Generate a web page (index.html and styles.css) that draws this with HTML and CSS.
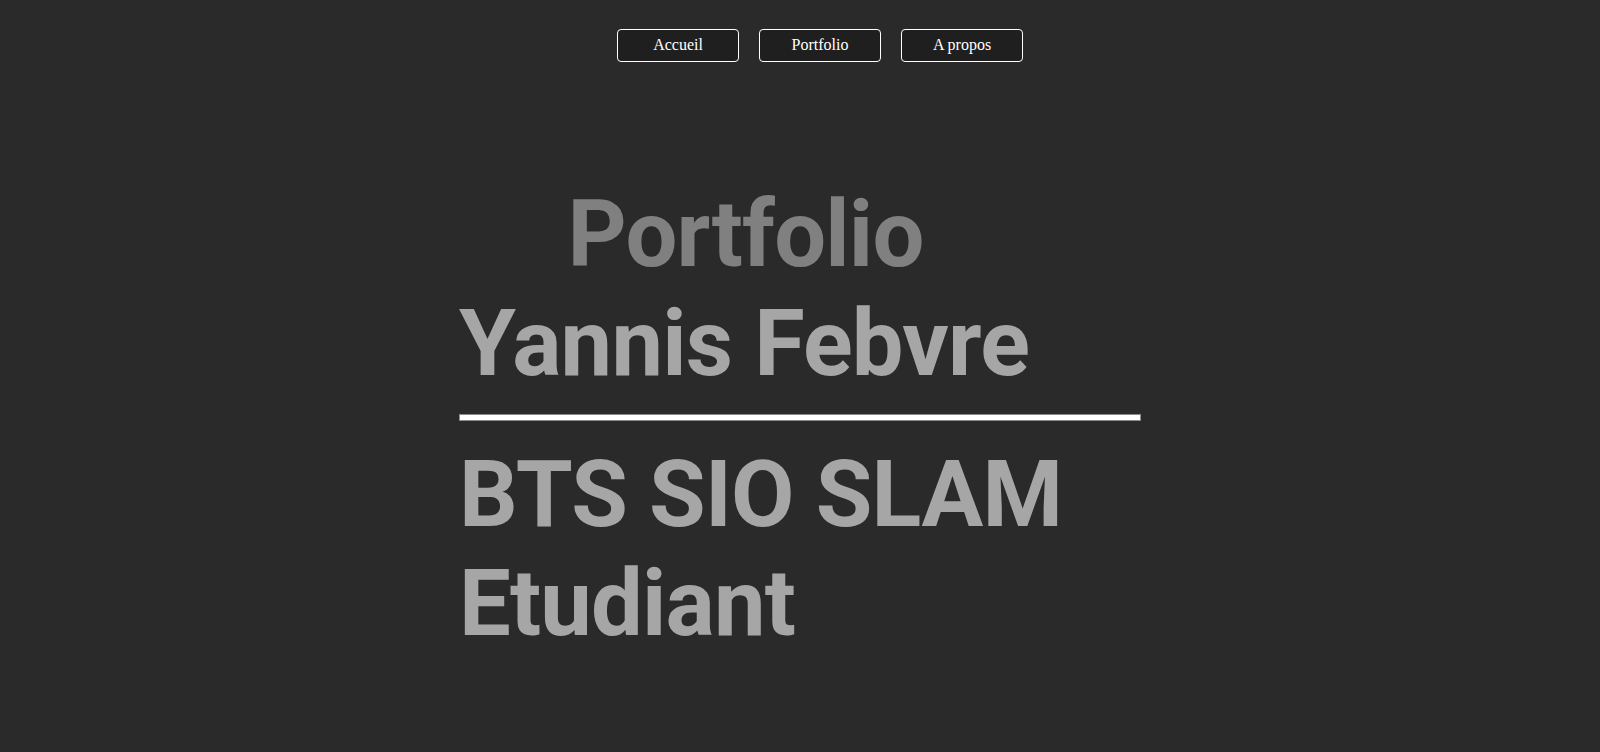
FILE: index.html
```html
<!DOCTYPE html>
<html lang="fr">
<head>
<meta charset="utf-8">
<title>Portfolio - Yannis Febvre</title>
<link rel="stylesheet" href="styles.css">
</head>
<body>
<nav class="nav">
  <ul class="menu">
    <li><a class="btn" href="#">Accueil</a></li>
    <li><a class="btn" href="#">Portfolio</a></li>
    <li><a class="btn" href="#">A propos</a></li>
  </ul>
</nav>
<main class="hero">
  <h1 class="title">
    <span class="title-top">Portfolio</span>
    <span class="title-name">Yannis Febvre</span>
  </h1>
  <hr class="divider">
  <h2 class="subtitle">BTS SIO SLAM<br>Etudiant</h2>
</main>
</body>
</html>
```
FILE: styles.css
```css
html, body {
  margin: 0;
  padding: 0;
}
body {
  background: #2a2a2a;
  min-height: 752px;
  font-family: "Liberation Serif", "Times New Roman", serif;
}
.menu {
  display: flex;
  justify-content: center;
  gap: 20px;
  list-style: none;
  margin: 0;
  padding: 29px 0 0 40px;
}
.btn {
  display: flex;
  align-items: center;
  justify-content: center;
  box-sizing: border-box;
  width: 122px;
  height: 33px;
  border: 1px solid #ffffff;
  border-radius: 4px;
  background: #1f1f1f;
  color: #ffffff;
  font-size: 16px;
  text-decoration: none;
  padding-bottom: 1px;
}
.hero {
  width: 682px;
  margin: 118px auto 0;
  font-family: Roboto, "Liberation Sans", sans-serif;
  font-weight: 700;
}
.title {
  display: inline-flex;
  flex-direction: column;
  align-items: center;
  margin: 0;
  font-size: 92px;
  line-height: 109px;
  letter-spacing: -0.8px;
  font-weight: 700;
}
.title-top {
  color: #808080;
  padding-left: 3px;
}
.title-name {
  color: #a6a6a6;
}
.divider {
  height: 5px;
  margin: 16px 0 19px;
  border: 1px solid #8a8a8a;
  background: #ffffff;
}
.subtitle {
  margin: 0;
  font-size: 92px;
  line-height: 109px;
  letter-spacing: -0.8px;
  font-weight: 700;
  color: #a6a6a6;
}
```
